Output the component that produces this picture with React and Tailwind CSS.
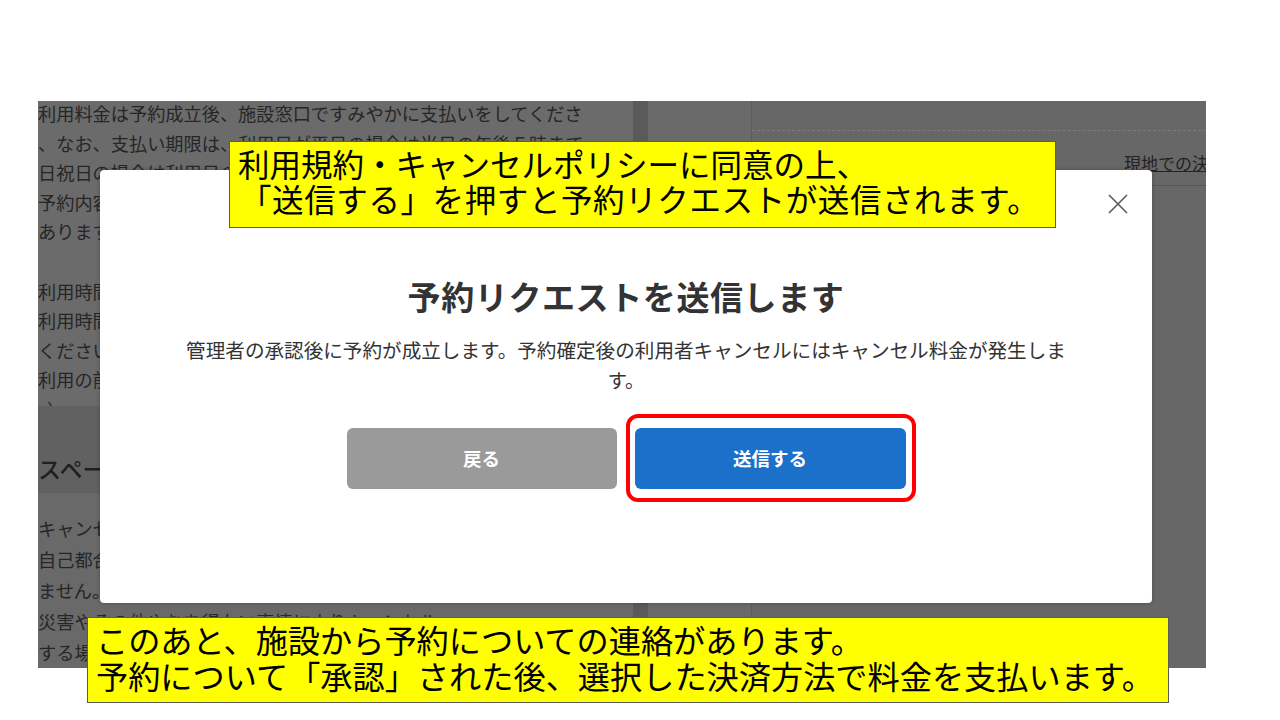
import React from "react";

const JP = "font-['Noto_Sans_CJK_JP','Noto_Sans',sans-serif]";

const topLines = [
  "利用料金は予約成立後、施設窓口ですみやかに支払いをしてくださ",
  "、なお、支払い期限は、利用日が平日の場合は当日の午後５時まで",
  "日祝日の場合は利用日の前日の午後５時までとなります。",
  "予約内容の変更・キャンセルについては施設まで連絡をお願いし",
  "ありますので、ご了承ください。",
  "",
  "利用時間には準備・片付けの時間も含めてご予約ください。",
  "利用時間を超過した場合は延長料金が発生します。",
  "ください。",
  "利用の前日までにご連絡ください。",
  "。）",
];

const bottomLines = [
  "キャンセル料金について",
  "自己都合によるキャンセルの場合、返金はでき",
  "ません。",
  "災害やその他やむを得ない事情によりキャンセル",
  "する場合は",
];

export default function App() {
  return (
    <div className={`relative w-[1280px] h-[720px] bg-white overflow-hidden ${JP}`}>
      {/* dimmed page screenshot */}
      <div className="pt-[101px] pl-[38px]">
        <div className="flex w-[1168px] h-[567px] bg-[#676767] overflow-hidden">
          {/* left text column */}
          <div className="w-[595px] flex flex-col text-[#262626]">
            <div className="bg-[#6b6b6b] h-[318px] overflow-hidden">
              <div className="-mt-[2px]">
                {topLines.map((t, i) => (
                  <div key={i} className="h-[29.6px] leading-[29.6px] text-[18.2px] whitespace-nowrap">
                    {t || "\u00a0"}
                  </div>
                ))}
              </div>
            </div>
            <div className="bg-[#616161] h-[89px] pt-[47px]">
              <div className="text-[23px] leading-[30px] font-medium text-[#1f1f1f] whitespace-nowrap">
                スペースの利用について
              </div>
            </div>
            <div className="flex-1 bg-[#696969] pt-[20px]">
              {bottomLines.map((t, i) => (
                <div key={i} className="h-[31px] leading-[31px] text-[18.2px] whitespace-nowrap">
                  {t}
                </div>
              ))}
            </div>
          </div>
          {/* scrollbar strip */}
          <div className="w-[15px] bg-[#5a5a5a]" />
          <div className="w-[104px] bg-[#6a6a6a] border-r border-[#5c5c5c]" />
          {/* right panel */}
          <div className="flex-1 bg-[#676767] flex flex-col">
            <div className="h-[30px] border-b border-dashed border-[#7c7c7c]" />
            <div className="flex justify-end pt-[20px] pr-0">
              <span className="text-[17px] leading-[24px] text-[#222] underline whitespace-nowrap -mr-[20px]">
                現地での決済
              </span>
            </div>
            <div className="mt-[10px] h-px bg-[#555]" />
          </div>
        </div>
      </div>

      {/* modal */}
      <div className="absolute left-[100px] top-[170px] w-[1052px] h-[433px] bg-white rounded-[4px] shadow-[0_0_4px_rgba(0,0,0,0.25)]">
        <button className="absolute right-[24px] top-[24px] w-[20px] h-[20px] flex items-center justify-center">
          <svg width="20" height="20" viewBox="0 0 20 20" fill="none">
            <path d="M1 1L19 19M19 1L1 19" stroke="#5a5a5a" strokeWidth="1.6" />
          </svg>
        </button>
        <div className="flex flex-col items-center pt-[106px]">
          <div className="text-[33px] leading-[40px] font-bold text-[#333] tracking-[0.6px]">
            予約リクエストを送信します
          </div>
          <div className="mt-[19px] text-[19.6px] leading-[30px] text-[#333] text-center">
            <div className="whitespace-nowrap">
              管理者の承認後に予約が成立します。予約確定後の利用者キャンセルにはキャンセル料金が発生しま
            </div>
            <div>す。</div>
          </div>
          <div className="mt-[33px] flex gap-[18px]">
            <button className="w-[270px] h-[61px] rounded-[6px] bg-[#9a9a9a] text-white text-[18.5px] font-bold">
              戻る
            </button>
            <div className="relative">
              <button className="w-[271px] h-[61px] rounded-[6px] bg-[#1b70c9] text-white text-[18.5px] font-bold">
                送信する
              </button>
              <div className="absolute -left-[9px] -top-[14px] w-[290px] h-[88px] border-[4px] border-[#ff0000] rounded-[12px]" />
            </div>
          </div>
        </div>
      </div>

      {/* callout 1 */}
      <div className="absolute left-[229px] top-[141px] w-[827px] h-[87px] bg-[#ffff00] border border-[#5a5a5a] pl-[8px] pt-[4px] text-black text-[31.5px] leading-[35px] whitespace-nowrap">
        <div>利用規約・キャンセルポリシーに同意の上、</div>
        <div className="pl-[2px] tracking-[0.6px]">「送信する」を押すと予約リクエストが送信されます。</div>
      </div>

      {/* callout 2 */}
      <div className="absolute left-[87px] top-[617px] w-[1082px] h-[86px] bg-[#ffff00] border border-[#5a5a5a] pl-[8px] pt-[3px] text-black text-[32.2px] leading-[36px] whitespace-nowrap">
        <div>このあと、施設から予約についての連絡があります。</div>
        <div>予約について「承認」された後、選択した決済方法で料金を支払います。</div>
      </div>
    </div>
  );
}
